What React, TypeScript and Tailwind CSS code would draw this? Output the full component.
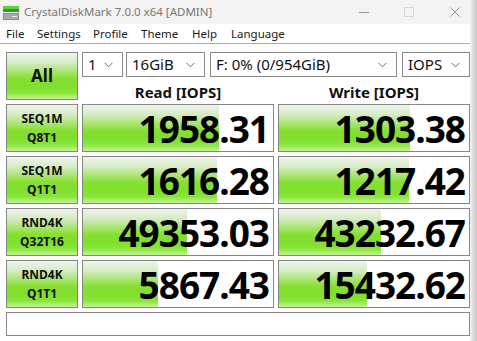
import React from "react";

const GREEN =
  "linear-gradient(to bottom, #f1f3ef 0%, #d3ebc0 22%, #a5e46a 42%, #86e033 55%, #80df2b 72%, #88e53a 86%, #c2f393 100%)";

const rows = [
  { l1: "SEQ1M", l2: "Q8T1", r: "1958.31", rw: 136, w: "1303.38", ww: 131 },
  { l1: "SEQ1M", l2: "Q1T1", r: "1616.28", rw: 134, w: "1217.42", ww: 130 },
  { l1: "RND4K", l2: "Q32T16", r: "49353.03", rw: 104, w: "43232.67", ww: 102 },
  { l1: "RND4K", l2: "Q1T1", r: "5867.43", rw: 75, w: "15432.62", ww: 88 },
];

function Chevron() {
  return (
    <svg width="9" height="6" viewBox="0 0 9 6" className="shrink-0">
      <path d="M0.5 0.8 L4.5 4.8 L8.5 0.8" fill="none" stroke="#6a6a6a" strokeWidth="1" />
    </svg>
  );
}

function Combo({ text, w, ml }: { text: string; w: string; ml: string }) {
  return (
    <div
      className={`${w} ${ml} h-[25px] border border-[#8a8a8a] bg-white flex items-center justify-between pl-[5px] pr-[9px] text-[15px] text-[#111]`}
    >
      <span className="leading-none">{text}</span>
      <Chevron />
    </div>
  );
}

function ValueCell({ value, fill }: { value: string; fill: number }) {
  return (
    <div className="border border-[#868686] bg-white grid overflow-hidden">
      <div className="col-start-1 row-start-1 h-full" style={{ width: fill, background: GREEN }} />
      <div className="col-start-1 row-start-1 flex items-center justify-end pr-[4px] text-[37px] font-bold text-black leading-none tracking-[-1px]">
        {value}
      </div>
    </div>
  );
}

export default function App() {
  return (
    <div
      className="w-[477px] h-[341px] flex bg-white overflow-hidden"
      style={{ fontFamily: '"Noto Sans", "Open Sans", sans-serif' }}
    >
      <div className="w-[470px] flex flex-col">
        {/* title bar */}
        <div className="h-[24px] bg-[#f3f3f3] flex items-center">
          <svg width="16" height="14" viewBox="0 0 16 14" className="ml-[3px] mt-[1px]">
            <rect x="0" y="0" width="16" height="3" fill="#5cd23a" />
            <rect x="0" y="3" width="16" height="3" fill="#2f9a2a" />
            <rect x="0" y="7" width="16" height="7" fill="#8c8c8c" />
            <rect x="1" y="8" width="14" height="5" fill="#a8a8a8" />
            <rect x="9" y="10" width="5" height="1" fill="#e8e8e8" />
          </svg>
          <span className="ml-[5px] text-[11.5px] text-[#777]">CrystalDiskMark 7.0.0 x64 [ADMIN]</span>
          <div className="ml-auto flex items-center h-full">
            <div className="w-[10px] h-px bg-[#9a9a9a] mr-[35px]" />
            <div className="w-[10px] h-[10px] border border-[#d4d4d4] rounded-[1px] mr-[36px]" />
            <svg width="10" height="10" viewBox="0 0 10 10" className="mr-[10px]">
              <path d="M0.5 0.5 L9.5 9.5 M9.5 0.5 L0.5 9.5" stroke="#9a9a9a" strokeWidth="1" />
            </svg>
          </div>
        </div>
        {/* menu */}
        <div className="h-[19px] bg-white flex items-center text-[11.5px] text-[#1a1a1a]">
          <span className="w-[37px] shrink-0 pl-[6px]">File</span>
          <span className="w-[56px] shrink-0">Settings</span>
          <span className="w-[48px] shrink-0">Profile</span>
          <span className="w-[51px] shrink-0">Theme</span>
          <span className="w-[39px] shrink-0">Help</span>
          <span>Language</span>
        </div>
        <div className="h-px bg-[#ababab]" />
        {/* content */}
        <div className="grid grid-cols-[72px_192px_192px] grid-rows-[25px_19px_48px_48px_48px_48px_24px] gap-[4px] pl-[6px] pt-[8px]">
          <div
            className="row-span-2 border border-[#868686] flex items-center justify-center text-[17px] font-bold text-[#111]"
            style={{ background: GREEN }}
          >
            All
          </div>
          <div className="col-span-2 flex">
            <Combo text="1" w="w-[41px]" ml="" />
            <Combo text="16GiB" w="w-[79px]" ml="ml-[3px]" />
            <Combo text="F: 0% (0/954GiB)" w="w-[187px]" ml="ml-[5px]" />
            <Combo text="IOPS" w="w-[68px]" ml="ml-[5px]" />
          </div>
          <div className="flex items-center justify-center pt-[4px] text-[15px] font-bold text-[#111] leading-none">
            Read [IOPS]
          </div>
          <div className="flex items-center justify-center pt-[4px] text-[15px] font-bold text-[#111] leading-none">
            Write [IOPS]
          </div>
          {rows.map((r, i) => (
            <React.Fragment key={i}>
              <div
                className="border border-[#868686] flex flex-col items-center justify-center text-[12px] font-bold text-[#111] leading-[19px]"
                style={{ background: GREEN }}
              >
                <span>{r.l1}</span>
                <span>{r.l2}</span>
              </div>
              <ValueCell value={r.r} fill={r.rw} />
              <ValueCell value={r.w} fill={r.ww} />
            </React.Fragment>
          ))}
          <div className="col-span-3 border border-[#868686] bg-white" />
        </div>
      </div>
      <div className="w-[7px] h-full bg-gradient-to-r from-[#f4f4f4] to-[#c4c4c4]" />
    </div>
  );
}
